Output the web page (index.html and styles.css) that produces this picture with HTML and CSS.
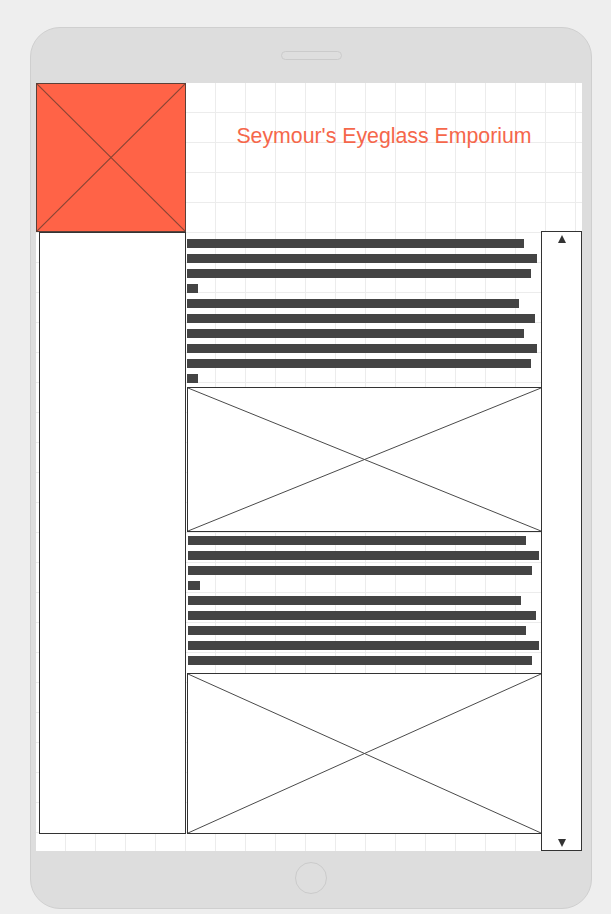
FILE: index.html
```html
<!DOCTYPE html>
<html>
<head>
<meta charset="utf-8">
<link rel="stylesheet" href="styles.css">
</head>
<body>
<div class="device">
  <div class="bezel-top"><div class="speaker"></div></div>
  <div class="screen">
    <div class="header">
      <div class="logo">
        <svg class="cross" viewBox="0 0 100 100" preserveAspectRatio="none"><line x1="0" y1="0" x2="100" y2="100"/><line x1="100" y1="0" x2="0" y2="100"/></svg>
      </div>
      <h1 class="title">Seymour's Eyeglass Emporium</h1>
    </div>
    <div class="body">
      <aside class="sidebar"></aside>
      <main class="main">
        <div class="text t1">
          <div class="bar" style="width:337px"></div>
          <div class="bar" style="width:350px"></div>
          <div class="bar" style="width:344px"></div>
          <div class="bar" style="width:11px"></div>
          <div class="bar" style="width:332px"></div>
          <div class="bar" style="width:348px"></div>
          <div class="bar" style="width:337px"></div>
          <div class="bar" style="width:350px"></div>
          <div class="bar" style="width:344px"></div>
          <div class="bar" style="width:11px"></div>
        </div>
        <div class="ph ph1">
          <svg class="cross" viewBox="0 0 100 100" preserveAspectRatio="none"><line x1="0" y1="0" x2="100" y2="100"/><line x1="100" y1="0" x2="0" y2="100"/></svg>
        </div>
        <div class="text t2">
          <div class="bar" style="width:338px"></div>
          <div class="bar" style="width:351px"></div>
          <div class="bar" style="width:344px"></div>
          <div class="bar" style="width:12px"></div>
          <div class="bar" style="width:333px"></div>
          <div class="bar" style="width:348px"></div>
          <div class="bar" style="width:338px"></div>
          <div class="bar" style="width:351px"></div>
          <div class="bar" style="width:344px"></div>
        </div>
        <div class="ph ph2">
          <svg class="cross" viewBox="0 0 100 100" preserveAspectRatio="none"><line x1="0" y1="0" x2="100" y2="100"/><line x1="100" y1="0" x2="0" y2="100"/></svg>
        </div>
      </main>
      <div class="scrollbar">
        <span class="arrow up"></span>
        <span class="arrow down"></span>
      </div>
    </div>
  </div>
  <div class="bezel-bottom"><div class="home"></div></div>
</div>
</body>
</html>
```

FILE: styles.css
```css
* { box-sizing: border-box; }
html, body { margin: 0; padding: 0; }
body {
  background: #eeeeee;
  font-family: "Liberation Sans", Arial, sans-serif;
  width: 611px;
  height: 914px;
  overflow: hidden;
}
.device {
  margin: 27px 0 0 30px;
  width: 562px;
  height: 882px;
  background: #dddddd;
  border: 1px solid #cfcfcf;
  border-radius: 30px;
  padding: 0 9px 0 5px;
  display: flex;
  flex-direction: column;
}
.bezel-top {
  height: 55px;
  display: flex;
  justify-content: center;
  padding-top: 23px;
  padding-left: 4px;
}
.speaker {
  width: 61px;
  height: 9px;
  border: 1px solid #cbcbcb;
  border-radius: 5px;
  background: #dedede;
}
.screen {
  width: 546px;
  height: 768px;
  background-color: #ffffff;
  background-image:
    linear-gradient(to right, transparent 29px, #ececec 29px, #ececec 31px, transparent 31px),
    linear-gradient(to bottom, transparent 29px, #ececec 29px, #ececec 31px, transparent 31px);
  background-size: 30px 30px;
  display: flex;
  flex-direction: column;
}
.header {
  height: 148px;
  display: flex;
  align-items: flex-start;
}
.logo {
  width: 150px;
  height: 149px;
  flex: none;
  background: #ff6347;
  border: 1px solid #5b4038;
  position: relative;
  z-index: 2;
}
.logo .cross line { stroke: #8a4535; stroke-width: 1.2; }
.cross {
  display: block;
  width: 100%;
  height: 100%;
}
.cross line {
  stroke: #4a4a4a;
  stroke-width: 1;
  vector-effect: non-scaling-stroke;
}
.title {
  flex: 1;
  margin: 0;
  padding-top: 41px;
  text-align: center;
  font-weight: normal;
  font-size: 21.3px;
  line-height: 25px;
  color: #f5674b;
}
.body {
  display: flex;
  align-items: flex-start;
  height: 620px;
  padding-left: 3px;
}
.sidebar {
  width: 147px;
  height: 602px;
  margin-top: 1px;
  flex: none;
  background: #ffffff;
  border: 1px solid #333333;
}
.main {
  width: 355px;
  flex: none;
  display: flex;
  flex-direction: column;
}
.text {
  display: flex;
  flex-direction: column;
  gap: 6px;
}
.t1 { padding: 8px 0 0 1px; }
.t2 { padding: 4px 0 0 2px; }
.bar {
  height: 9px;
  background: #444444;
}
.ph {
  margin-left: 1px;
  width: 355px;
  background: #ffffff;
  border: 1px solid #333333;
}
.ph1 { height: 145px; margin-top: 4px; }
.ph2 { height: 161px; margin-top: 8px; }
.scrollbar {
  width: 41px;
  height: 620px;
  flex: none;
  background: #ffffff;
  border: 1px solid #333333;
  display: flex;
  flex-direction: column;
  justify-content: space-between;
  align-items: center;
  padding: 3px 0 3px 0;
}
.arrow {
  width: 0;
  height: 0;
  border-left: 4px solid transparent;
  border-right: 4px solid transparent;
}
.up { border-bottom: 8px solid #333333; }
.down { border-top: 8px solid #333333; }
.bezel-bottom {
  flex: 1;
  display: flex;
  justify-content: center;
  padding-top: 11px;
  padding-left: 4px;
}
.home {
  width: 32px;
  height: 32px;
  border-radius: 50%;
  border: 1px solid #cbcbcb;
  background: #dedede;
}
```
